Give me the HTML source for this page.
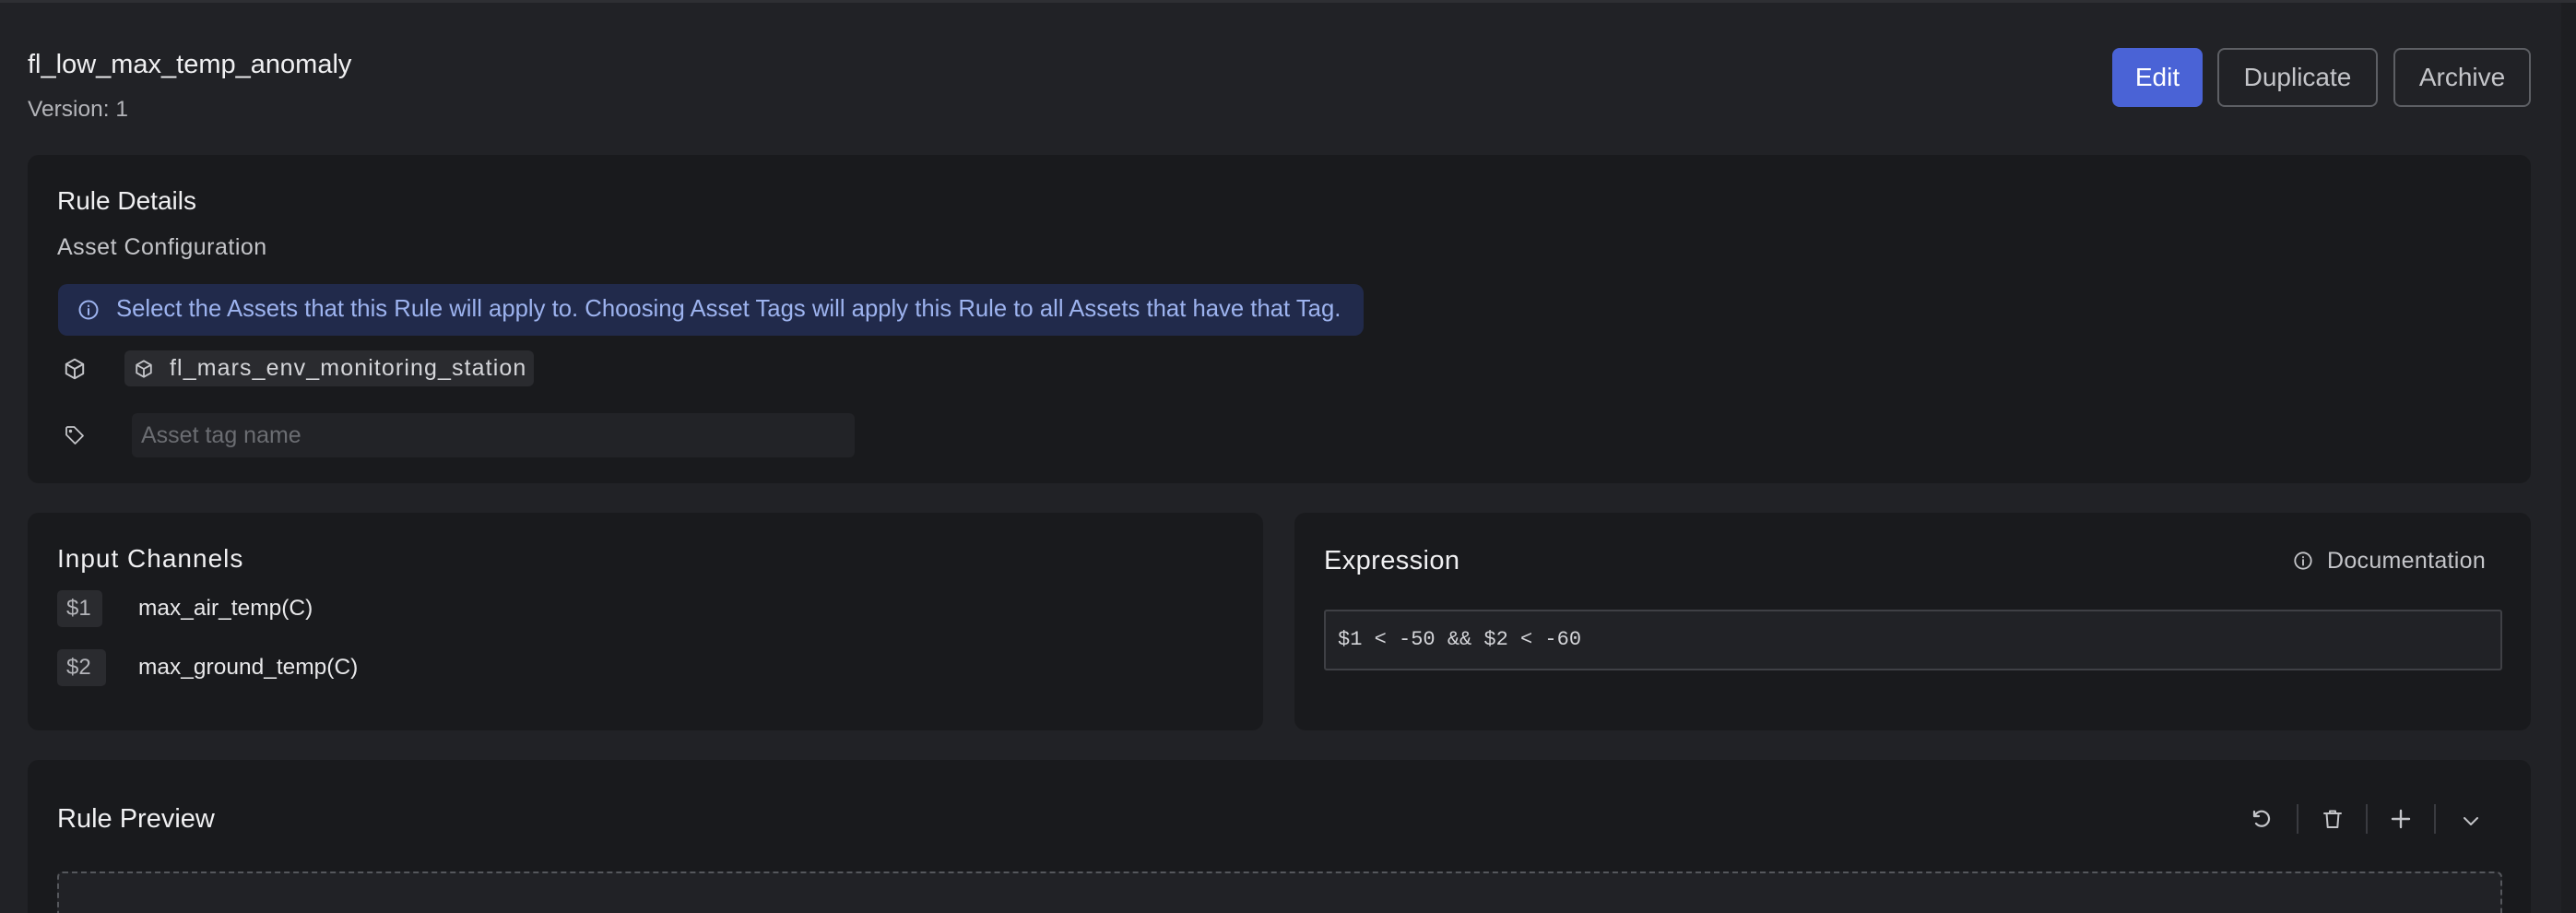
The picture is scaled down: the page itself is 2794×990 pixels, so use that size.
<!DOCTYPE html>
<html style="overflow:hidden;height:990px"><head><meta charset="utf-8"><style>
*{box-sizing:border-box;margin:0;padding:0}
body{width:2794px;height:990px;background:#212226;font-family:"Liberation Sans",sans-serif;color:#e8e8ea;position:relative;overflow:hidden}
.abs{position:absolute}
.topline{left:0;top:0;width:2794px;height:3px;background:#2e2f33}
.scroll{left:2778px;top:3px;width:16px;height:987px;background:#1d1e21}
.card{position:absolute;background:#191a1d;border-radius:12px}
.btn{position:absolute;top:52px;height:64px;border-radius:8px;font-size:28px;display:flex;align-items:center;justify-content:center}
.out{border:2px solid #5d5f64;color:#c4c5c9}
.t{position:absolute;white-space:nowrap;line-height:1}
svg{position:absolute}
</style></head><body>
<div class="abs topline"></div>
<div class="abs scroll"></div>

<div class="t" style="left:30px;top:56px;font-size:29px;color:#f0f0f2">fl_low_max_temp_anomaly</div>
<div class="t" style="left:30px;top:107px;font-size:24.5px;color:#b4b5ba">Version: 1</div>

<div class="btn" style="left:2291px;width:98px;background:#4a63d6;color:#fff">Edit</div>
<div class="btn out" style="left:2405px;width:174px">Duplicate</div>
<div class="btn out" style="left:2596px;width:149px">Archive</div>

<!-- Rule details -->
<div class="card" style="left:30px;top:168px;width:2715px;height:356px"></div>
<div class="t" style="left:62px;top:204px;font-size:28px;color:#f0f0f2">Rule Details</div>
<div class="t" style="left:62px;top:256px;font-size:25px;letter-spacing:0.5px;color:#c4c5c9">Asset Configuration</div>
<div class="abs" style="left:63px;top:308px;width:1416px;height:56px;background:#212a4b;border-radius:10px"></div>
<svg style="left:84px;top:324px" width="24" height="24" viewBox="0 0 24 24" fill="none" stroke="#9db3ef" stroke-width="2"><circle cx="12" cy="12" r="9.5"/><path d="M12 11v6M12 7.5v.5" stroke-linecap="round"/></svg>
<div class="t" style="left:126px;top:323px;font-size:25.7px;color:#9db3ef">Select the Assets that this Rule will apply to. Choosing Asset Tags will apply this Rule to all Assets that have that Tag.</div>

<svg style="left:68px;top:387px" width="26" height="26" viewBox="0 0 24 24" fill="none" stroke="#c4c5c9" stroke-width="1.8" stroke-linejoin="round"><path d="M12 2.5l8.5 4.8v9.4L12 21.5l-8.5-4.8V7.3z"/><path d="M3.5 7.3L12 12l8.5-4.7M12 12v9.5"/></svg>
<div class="abs" style="left:135px;top:380px;width:444px;height:39px;background:#2a2b2f;border-radius:6px"></div>
<svg style="left:145px;top:389px" width="22" height="22" viewBox="0 0 24 24" fill="none" stroke="#c4c5c9" stroke-width="2" stroke-linejoin="round"><path d="M12 2.5l8.5 4.8v9.4L12 21.5l-8.5-4.8V7.3z"/><path d="M3.5 7.3L12 12l8.5-4.7M12 12v9.5"/></svg>
<div class="t" style="left:184px;top:387px;font-size:25px;letter-spacing:1.1px;color:#d4d5d9">fl_mars_env_monitoring_station</div>

<svg style="left:69px;top:460px" width="24" height="24" viewBox="0 0 24 24" fill="none" stroke="#c4c5c9" stroke-width="1.8" stroke-linejoin="round"><path d="M3 4v7.5l9.5 9.5 8.5-8.5L11.5 3H4z"/><circle cx="7.5" cy="7.5" r=".8"/></svg>
<div class="abs" style="left:143px;top:448px;width:784px;height:48px;background:#222327;border-radius:6px"></div>
<div class="t" style="left:153px;top:460px;font-size:25px;color:#6b6d72">Asset tag name</div>

<!-- Input Channels -->
<div class="card" style="left:30px;top:556px;width:1340px;height:236px"></div>
<div class="t" style="left:62px;top:592px;font-size:28px;letter-spacing:1px;color:#f0f0f2">Input Channels</div>
<div class="abs" style="left:62px;top:640px;width:49px;height:40px;background:#2a2b2f;border-radius:5px"></div>
<div class="t" style="left:72px;top:648px;font-size:24px;color:#b4b5ba">$1</div>
<div class="t" style="left:150px;top:648px;font-size:24.5px;color:#e8e8ea">max_air_temp(C)</div>
<div class="abs" style="left:62px;top:704px;width:53px;height:40px;background:#2a2b2f;border-radius:5px"></div>
<div class="t" style="left:72px;top:712px;font-size:24px;color:#b4b5ba">$2</div>
<div class="t" style="left:150px;top:712px;font-size:24.5px;color:#e8e8ea">max_ground_temp(C)</div>

<!-- Expression -->
<div class="card" style="left:1404px;top:556px;width:1341px;height:236px"></div>
<div class="t" style="left:1436px;top:594px;font-size:29px;letter-spacing:0.4px;color:#f0f0f2">Expression</div>
<svg style="left:2487px;top:597px" width="22" height="22" viewBox="0 0 24 24" fill="none" stroke="#c4c5c9" stroke-width="2"><circle cx="12" cy="12" r="9.5"/><path d="M12 11v6M12 7.5v.5" stroke-linecap="round"/></svg>
<div class="t" style="left:2524px;top:596px;font-size:25px;letter-spacing:0.3px;color:#c4c5c9">Documentation</div>
<div class="abs" style="left:1436px;top:661px;width:1278px;height:66px;background:#212226;border:2px solid #3f4045;border-radius:3px"></div>
<div class="t" style="left:1451px;top:683px;font-size:22px;font-family:'Liberation Mono',monospace;color:#d4d5d9">$1 &lt; -50 &amp;&amp; $2 &lt; -60</div>

<!-- Rule Preview -->
<div class="card" style="left:30px;top:824px;width:2715px;height:166px;border-radius:12px 12px 0 0"></div>
<div class="t" style="left:62px;top:874px;font-size:29px;color:#f0f0f2">Rule Preview</div>
<svg style="left:2441px;top:876px" width="24" height="24" viewBox="0 0 24 24" fill="none" stroke="#c4c5c9" stroke-width="2.2" stroke-linecap="round" stroke-linejoin="round"><path d="M4 4v5h5"/><path d="M4.5 9A8 8 0 1 1 6 17"/></svg>
<div class="abs" style="left:2491px;top:872px;width:2px;height:32px;background:#3a3b40"></div>
<svg style="left:2518px;top:876px" width="24" height="24" viewBox="0 0 24 24" fill="none" stroke="#c4c5c9" stroke-width="2" stroke-linecap="round" stroke-linejoin="round"><path d="M3 6h18M9 6V3.5h6V6M5.5 6l1.2 15h10.6L18.5 6"/></svg>
<div class="abs" style="left:2566px;top:872px;width:2px;height:32px;background:#3a3b40"></div>
<svg style="left:2592px;top:876px" width="24" height="24" viewBox="0 0 24 24" fill="none" stroke="#c4c5c9" stroke-width="2.4" stroke-linecap="round"><path d="M12 3v18M3 12h18"/></svg>
<div class="abs" style="left:2640px;top:872px;width:2px;height:32px;background:#3a3b40"></div>
<svg style="left:2668px;top:878px" width="24" height="24" viewBox="0 0 24 24" fill="none" stroke="#c4c5c9" stroke-width="2" stroke-linecap="round" stroke-linejoin="round"><path d="M5 9l7 7 7-7"/></svg>
<div class="abs" style="left:62px;top:945px;width:2652px;height:45px;background:#212226;border:2px dashed #55575c;border-bottom:none;border-radius:6px 6px 0 0"></div>
</body></html>
